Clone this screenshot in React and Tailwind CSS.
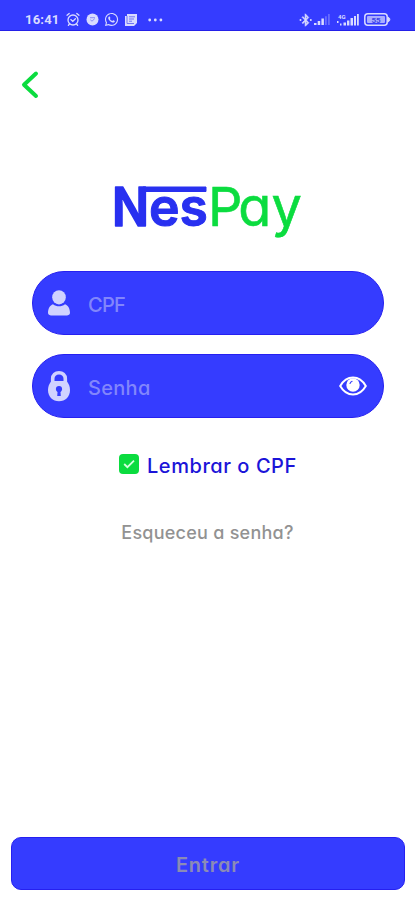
import { useState } from 'react';
import { FaBluetoothB, FaWhatsapp } from 'react-icons/fa';

const StatusBar = () => (
  <div className="flex h-[31px] shrink-0 items-start justify-between border-b border-[#2420e8] bg-[#353cff] pt-[12px] pr-[24px] pl-[25px] text-[#d9dbff]">
    <div className="flex h-[15px] items-center">
      <span className="w-[35px] font-['Roboto',sans-serif] text-[13px] leading-[15px] font-bold tracking-[0.2px]">16:41</span>
      <svg className="ml-[6px] h-[15px] w-[14px]" viewBox="0 0 14 15" fill="none" stroke="currentColor" strokeWidth="1.3" strokeLinecap="round">
        <circle cx="7" cy="8" r="5" />
        <path d="M1 3.2 3.2 1.4M13 3.2l-2.2-1.8M4.8 7.6 6.8 9.4l2.6-2.6M3.4 12l-1 1.4M10.6 12l1 1.4" />
      </svg>
      <svg className="ml-[6px] h-[13px] w-[13px]" viewBox="0 0 13 13">
        <circle cx="6.5" cy="6.5" r="6" fill="currentColor" />
        <path d="M4 4.7h5M4.3 6.8 6 8.2l2.8-2.6" fill="none" stroke="#8b8ff5" strokeWidth="1" />
      </svg>
      <FaWhatsapp className="ml-[5px]" size={15} />
      <svg className="ml-[5px] h-[14px] w-[14px]" viewBox="0 0 14 14">
        <path d="M3 1h10v9l-3 3H1V3h2z" fill="currentColor" />
        <path d="M3 3v7.5h7M5 3.8h6M5 6h5M5 8.2h3" fill="none" stroke="#7075f5" strokeWidth="1" />
      </svg>
      <svg className="ml-[10px] h-[4px] w-[15px]" viewBox="0 0 15 4" fill="currentColor">
        <circle cx="1.7" cy="2" r="1.4" />
        <circle cx="7.3" cy="2" r="1.4" />
        <circle cx="12.9" cy="2" r="1.4" />
      </svg>
    </div>

    <div className="flex h-[15px] items-center">
      <svg className="h-[14px] w-[13px]" viewBox="0 0 13 14">
        <FaBluetoothB x="0" y="0.5" size={13} stroke="currentColor" strokeWidth="24" />
        <circle cx="1.5" cy="7" r="1" fill="currentColor" />
        <circle cx="11.8" cy="7" r="1" fill="currentColor" />
      </svg>
      <svg className="ml-[2px] h-[13px] w-[16px]" viewBox="0 0 16 13" fill="currentColor">
        <path d="M0 10h2.5v2H0zM3.7 8h2.5v4H3.7zM7.4 5.5h2.5V12H7.4z" />
        <path d="M11 3.3h1.8V12H11zM14 1h1.8v11H14z" opacity=".3" />
      </svg>
      <svg className="ml-[7px] h-[14px] w-[22px]" viewBox="0 0 22 14" fill="currentColor">
        <text x="1" y="5.5" fontSize="6" fontWeight="700" fontFamily="Roboto, sans-serif">4G</text>
        <path d="M0 8h1.5v2H0zM3 10.5h1.5v2H3zM6.5 9.5H9v3H6.5zM10 7.5h2.4v5H10zM13.5 5H16v7.5h-2.5zM17 3h2v9.5h-2zM20 1h1.8v11.5H20z" />
      </svg>
      <svg className="ml-[5px] h-[13px] w-[27px]" viewBox="0 0 27 13">
        <rect x=".8" y=".8" width="22.4" height="11.4" rx="3" fill="none" stroke="currentColor" strokeWidth="1.5" />
        <rect x="3" y="3" width="18" height="7" rx="1" fill="#a9adff" />
        <path d="M24 4.2c2.4.5 2.4 4.1 0 4.6z" fill="currentColor" stroke="currentColor" />
        <text x="7.5" y="9.6" fontSize="8" fontWeight="700" fill="#3d43e6" fontFamily="Roboto, sans-serif">55</text>
      </svg>
    </div>
  </div>
);

const Logo = () => (
  <svg className="h-[84px] w-[200px]" viewBox="0 -14 200 84" fontFamily="Inter, sans-serif" role="img" aria-label="NesPay">
    <g fill="#2830f0" stroke="#2830f0" strokeLinejoin="round">
      <text x="0" y="46.3" fontSize="54" fontWeight="600" strokeWidth="1.6" textLength="37" lengthAdjust="spacingAndGlyphs">N</text>
      <text x="37" y="46" fontSize="53" fontWeight="600" strokeWidth="1" textLength="59" lengthAdjust="spacingAndGlyphs">es</text>
      <rect x="31" y="7" width="63" height="4.5" strokeWidth="1" />
    </g>
    <g fill="#0bdc3f" stroke="#0bdc3f" strokeWidth=".6" style={{ fontFeatureSettings: '"cv11"' }}>
      <text x="96 126.3 159.5" y="46" fontSize="54" fontWeight="400">Pay</text>
    </g>
  </svg>
);

const UserIcon = () => (
  <svg className="h-[26px] w-[22px]" viewBox="0 0 22 26" fill="#d0d2ff">
    <ellipse cx="11" cy="7.3" rx="6.8" ry="7.1" />
    <path d="M5 14.2c3.6 2.7 8.4 2.7 12 0 3 .9 5 4.5 5 8.8 0 2-2.3 2.5-4.7 2.5H4.7C2.3 25.5 0 25 0 23c0-4.3 2-7.9 5-8.8z" />
  </svg>
);

const LockIcon = () => (
  <svg className="h-[32px] w-[22px]" viewBox="0 0 22 32">
    <path d="M4.7 14V8.8C4.7 5 7.4 2.8 11 2.8s6.3 2.2 6.3 6V14" fill="none" stroke="#d0d2ff" strokeWidth="3.6" />
    <path d="M3.5 11h15C20.7 13.3 22 16.5 22 20c0 6.7-4.7 11.3-11 11.3S0 26.7 0 20c0-3.5 1.3-6.7 3.5-9z" fill="#d0d2ff" />
    <circle cx="11" cy="19" r="3.1" fill="#353cff" />
    <path d="M9.7 20h2.6l.5 6H9.2z" fill="#353cff" />
  </svg>
);

const EyeIcon = () => (
  <svg className="h-[20px] w-[28px]" viewBox="0 0 28 20">
    <path d="M1.2 10C4.5 4.2 9 1.5 14 1.5S23.5 4.2 26.8 10C23.5 15.8 19 18.5 14 18.5S4.5 15.8 1.2 10z" fill="none" stroke="#fff" strokeWidth="2" />
    <circle cx="14" cy="9" r="6.7" fill="#fff" />
    <path d="M11 7.5c.4-1.2 1-1.9 2.1-2.2" fill="none" stroke="#353cff" strokeWidth="1.1" strokeLinecap="round" />
  </svg>
);

const fieldClass = 'flex h-16 items-center rounded-full border border-[#2620f0] bg-[#353cff] pr-[16px] pl-[15px]';
const inputClass =
  'ml-[18px] min-w-0 flex-1 bg-transparent text-[20px] font-medium text-white outline-none placeholder:text-[#8286fb] placeholder:opacity-100';

const App = () => {
  const [cpf, setCpf] = useState('');
  const [password, setPassword] = useState('');
  const [showPassword, setShowPassword] = useState(false);
  const [remember, setRemember] = useState(true);

  return (
    <div className="flex h-[900px] w-[415px] flex-col overflow-hidden bg-white font-['Inter',sans-serif] [font-feature-settings:'cv11']">
      <StatusBar />

      <button type="button" className="mt-[39px] ml-[21px] h-[30px] w-[20px] shrink-0" aria-label="Voltar">
        <svg className="h-[30px] w-[20px]" viewBox="0 0 20 30" fill="none" stroke="#0bdc3f" strokeWidth="4" strokeLinecap="round" strokeLinejoin="round">
          <path d="M15 3.5 3 14.7 15 26" />
        </svg>
      </button>

      <div className="mt-[66px] ml-[112px] h-[84px] shrink-0">
        <Logo />
      </div>

      <form className="mt-[21px] flex flex-1 flex-col" onSubmit={(e) => e.preventDefault()}>
        <div className="mr-[31px] ml-[32px] flex flex-col gap-[19px]">
          <div className={fieldClass}>
            <UserIcon />
            <input
              type="text"
              value={cpf}
              onChange={(e) => setCpf(e.target.value)}
              className={`${inputClass} pt-[4px] tracking-[-0.7px]`}
              placeholder="CPF"
            />
          </div>
          <div className={fieldClass}>
            <LockIcon />
            <input
              type={showPassword ? 'text' : 'password'}
              value={password}
              onChange={(e) => setPassword(e.target.value)}
              className={`${inputClass} pt-[4px] tracking-[0.3px]`}
              placeholder="Senha"
            />
            <button type="button" onClick={() => setShowPassword((s) => !s)} aria-label="Mostrar senha">
              <EyeIcon />
            </button>
          </div>
        </div>

        <button type="button" onClick={() => setRemember((r) => !r)} className="mt-[34px] ml-[119px] flex h-[28px] items-center gap-[8px] self-start">
          <span className="mb-[4px] flex h-[20px] w-[20px] items-center justify-center rounded-[4px] bg-[#0bdc3f]">
            {remember && (
              <svg className="h-[10px] w-[12px]" viewBox="0 0 12 10" fill="none" stroke="#d5ffdf" strokeWidth="1.8">
                <path d="M1.2 5 4.4 8.2 11 1.6" />
              </svg>
            )}
          </span>
          <span className="text-[20px] leading-[28px] font-medium tracking-[0.55px] whitespace-nowrap text-[#1b14d8]">Lembrar o CPF</span>
        </button>

        <a href="#" className="mt-[39px] self-center text-[18px] leading-[28px] font-medium tracking-[0.25px] whitespace-nowrap text-[#929292]">
          Esqueceu a senha?
        </a>

        <button
          type="submit"
          className="mt-auto mr-[10px] mb-[10px] ml-[11px] h-[53px] rounded-[10px] border border-[#2620f0] bg-[#353cff] pt-[3px] text-[20px] font-semibold tracking-[0.8px] text-[#8b8bb5]"
        >
          Entrar
        </button>
      </form>
    </div>
  );
};

export default App;
